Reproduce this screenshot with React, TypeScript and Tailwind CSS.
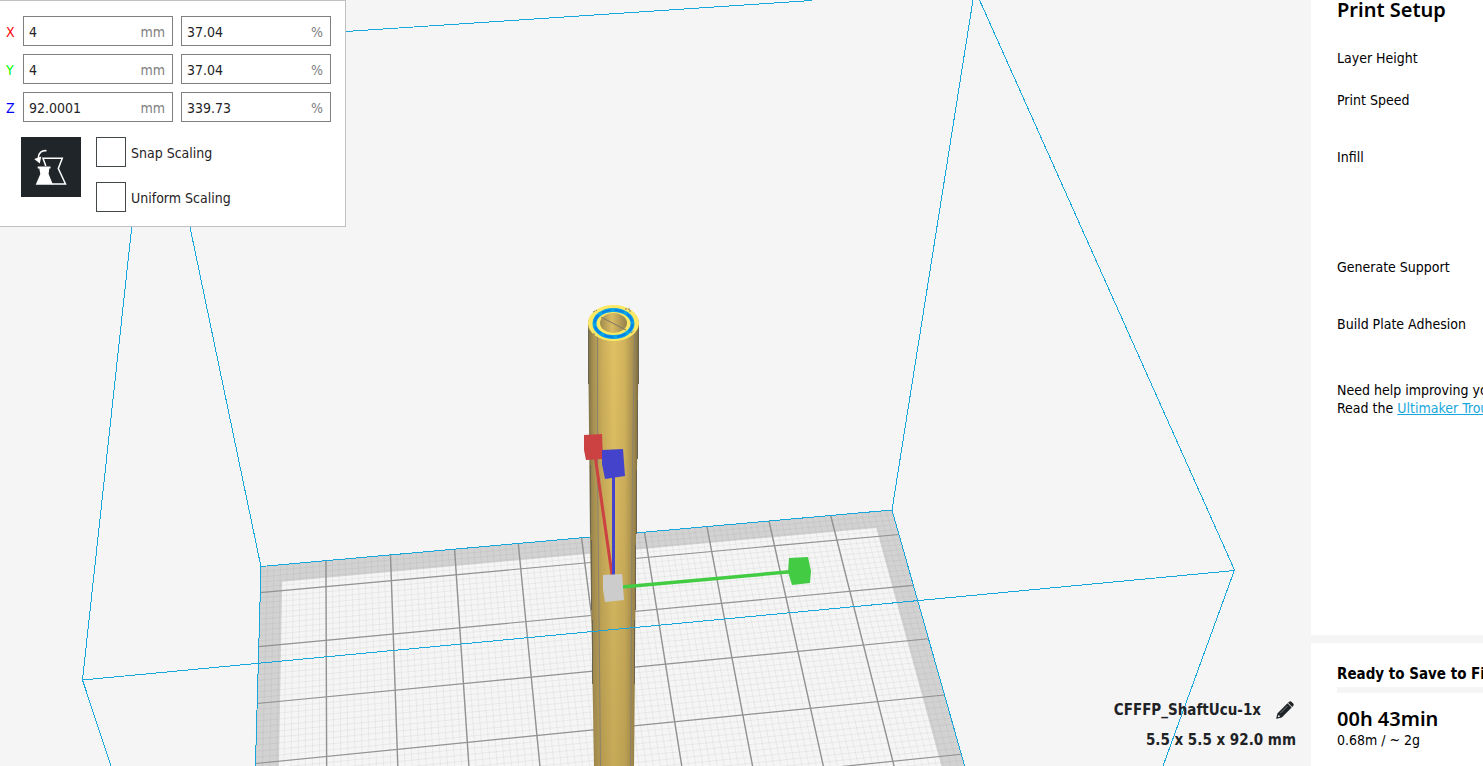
import React from "react";

type Pt = [number, number];

/* Projective map of the build plate: u runs 0..10 across, v runs -0.5.. towards the viewer. */
const origin: Pt = [261, 566.5];
const right: Pt = [892, 510];
const near: Pt = [255.5, 763.5];
const far: Pt = [944.5, 695];

const dx1 = right[0] - far[0];
const dy1 = right[1] - far[1];
const dx2 = near[0] - far[0];
const dy2 = near[1] - far[1];
const sx = origin[0] - right[0] + far[0] - near[0];
const sy = origin[1] - right[1] + far[1] - near[1];
const det = dx1 * dy2 - dx2 * dy1;
const g = (sx * dy2 - dx2 * sy) / det;
const h = (dx1 * sy - sx * dy1) / det;

function project(u: number, v: number): string {
  const s = u / 10;
  const t = (v + 0.5) / 3.5;
  const w = g * s + h * t + 1;
  const x = ((right[0] - origin[0] + g * right[0]) * s + (near[0] - origin[0] + h * near[0]) * t + origin[0]) / w;
  const y = ((right[1] - origin[1] + g * right[1]) * s + (near[1] - origin[1] + h * near[1]) * t + origin[1]) / w;
  return `${x.toFixed(2)} ${y.toFixed(2)}`;
}

const END = 6;
const line = (a: string, b: string) => `M${a}L${b}`;
const range = (n: number) => Array.from({ length: n }, (_, i) => i);

const minor = [
  ...range(101).map((i) => line(project(i / 10, -0.5), project(i / 10, END))),
  ...range(66).map((i) => line(project(0, i / 10 - 0.5), project(10, i / 10 - 0.5))),
].join("");
const majorU = range(9).map((i) => line(project(i + 1, -0.5), project(i + 1, END))).join("");
const majorV = range(6).map((i) => line(project(0, i), project(10, i))).join("");
const quad = (m: number) =>
  `M${project(m, m - 0.5)}L${project(10 - m, m - 0.5)}L${project(10 - m, END)}L${project(m, END)}Z`;

function Scene() {
  return (
    <svg
      className="absolute inset-0 h-full w-full"
      viewBox="0 0 1311 766"
      preserveAspectRatio="xMinYMin slice"
      fill="none"
      aria-hidden="true"
    >
      <defs>
        <linearGradient id="tube" x1="588" x2="639" y1="0" y2="0" gradientUnits="userSpaceOnUse">
          <stop offset="0" stopColor="#7d6f44" />
          <stop offset="0.1" stopColor="#a89253" />
          <stop offset="0.28" stopColor="#ccae5a" />
          <stop offset="0.5" stopColor="#e0c164" />
          <stop offset="0.72" stopColor="#d3b45d" />
          <stop offset="0.9" stopColor="#a58d4e" />
          <stop offset="1" stopColor="#746640" />
        </linearGradient>
        <linearGradient id="shade" x1="0" x2="0" y1="330" y2="766" gradientUnits="userSpaceOnUse">
          <stop offset="0" stopColor="#6b5a30" stopOpacity="0" />
          <stop offset="1" stopColor="#6b5a30" stopOpacity="0.22" />
        </linearGradient>
        <linearGradient id="bore" x1="600" x2="627" y1="0" y2="0" gradientUnits="userSpaceOnUse">
          <stop offset="0" stopColor="#a08b50" />
          <stop offset="0.45" stopColor="#d9bb62" />
          <stop offset="1" stopColor="#93804b" />
        </linearGradient>
      </defs>

      <path d={quad(0)} fill="#d2d2d2" />
      <path d={quad(0.33)} fill="#f5f5f5" />
      <path d={minor} stroke="#777777" strokeOpacity="0.09" />
      <path d={majorV} stroke="#929292" strokeWidth="1.2" />
      <path d={majorU} stroke="#929292" strokeWidth="1.4" />
      <g stroke="#18a7dc" shapeRendering="crispEdges">
        <path d={quad(0)} />
        <path d="M145 105L82.500 680M164.500 105L261 567M346 31.500L812 0.500M973 0L892 510M979.500 0L1234.500 570M82.500 680L111 766M1234.500 570L1163 766" />
      </g>

      <path d="M588 324L590 535L594 766H634L636 540L639 324A25.5 18 0 0 0 588 324Z" fill="url(#tube)" />
      <path d="M588 324L590 535L594 766H634L636 540L639 324Z" fill="url(#shade)" />
      <path d="M588.5 330V384M638.5 326V384M590.5 465V534M591.5 540V610M637.5 400V459M636.5 470V534M635.5 545V610M634.5 620V684M592.5 620V684" stroke="#69634f" />
      <path d="M597.5 336V470L600.5 766M634.5 334L632.5 470L630.5 766" stroke="#8a8270" />

      <ellipse cx="613.5" cy="323" rx="25.5" ry="18" fill="#fbe865" />
      <ellipse cx="613.5" cy="323.5" rx="19" ry="13.5" stroke="#08a6e4" strokeWidth="4" />
      <ellipse cx="613.5" cy="323.5" rx="19" ry="13.5" stroke="#087eea" strokeWidth="2" strokeDasharray="9 4" />
      <ellipse cx="613.5" cy="323" rx="13.5" ry="10" fill="url(#bore)" />
      <path d="M601 317L626 330" stroke="#7d7867" />
      <path d="M593 312L597 310M625 309L630 309V313M594 333V336M631 333L634 331" stroke="#807b6c" strokeDasharray="2 1" />

      <path d="M82.500 680L1234.500 570.500" stroke="#18a7dc" shapeRendering="crispEdges" />

      <path d="M595 455L613 582" stroke="#cc4141" strokeWidth="3" />
      <path d="M613.5 463V580" stroke="#4343cc" strokeWidth="3" />
      <path d="M622 587L799 571" stroke="#43cc43" strokeWidth="3.5" />
      <path d="M584 435L602 434L603 459L586 460L584 450Z" fill="#cc4141" />
      <path d="M602 450L623 449L625 476L605 479L602 464Z" fill="#4343cc" />
      <path d="M789 558L808 557L811 571L810 583L792 585L788 572Z" fill="#43cc43" />
      <path d="M603 575L622 574L624 600L605 602L603 589Z" fill="#cccccc" />
    </svg>
  );
}

function ResetIcon() {
  return (
    <svg width="60" height="60" viewBox="0 0 60 60" fill="none" aria-hidden="true">
      <path d="M24.800 29L22 21.300H41.300L37.300 31.500L44.500 47H31" stroke="#fff" strokeWidth="1.5" />
      <path d="M16.700 29.500H29.500V31.500H28.300L27.600 37L32 47.700H14.700L19.300 37L18.300 31.500H16.700Z" fill="#fff" />
      <path d="M25.500 13.700C21 13.200 17.300 15.800 17.300 21" stroke="#fff" strokeWidth="1.6" />
      <path d="M13.200 22L20.300 19.500L18.800 26.500Z" fill="#fff" />
    </svg>
  );
}

function PencilIcon() {
  return (
    <svg width="18" height="18" viewBox="0 0 18 18" aria-hidden="true">
      <path d="M12 1.800L13.200 0.700Q14.300 -0.200 15.400 0.800L17.200 2.600Q18.200 3.700 17.300 4.800L16.200 6Z" fill="#1f2326" />
      <path d="M11.500 2.300L15.700 6.500L6.300 15.900L2.100 11.700Z" fill="#1f2326" />
      <path d="M2.300 11.500L6.500 15.700L5.700 16.500L0.800 17.700Q0.100 17.800 0.300 17.100L1.500 12.300Z" fill="#1f2326" />
      <path d="M4.500 12L11.500 5" stroke="#8f9192" strokeWidth="0.8" />
      <circle cx="2.800" cy="15.200" r="1" fill="#e4e4e4" />
    </svg>
  );
}

const axes = [
  { name: "X", color: "text-[#ff0000]", size: "4", scale: "37.04" },
  { name: "Y", color: "text-[#00ff00]", size: "4", scale: "37.04" },
  { name: "Z", color: "text-[#0000ff]", size: "92.0001", scale: "339.73" },
];

function Field({ label, value, unit }: { label: string; value: string; unit: string }) {
  return (
    <label className="flex h-[30px] w-[150px] items-center border border-[#808080] bg-white pl-[5px] pr-[7px] pt-[2px]">
      <input aria-label={label} defaultValue={value} className="w-0 min-w-0 flex-1 bg-transparent outline-none" />
      <span className="text-[#808080]">{unit}</span>
    </label>
  );
}

function ScalePanel() {
  return (
    <section className="relative w-[346px] border-b border-r border-t border-[#c0c0c0] bg-white pb-[14px] pl-[6px] pt-[15px] text-[#1f2326]">
      <div className="flex flex-col gap-2">
        {axes.map((a) => (
          <div key={a.name} className="flex items-center">
            <span className={`w-[17px] pt-[2px] ${a.color}`}>{a.name}</span>
            <div className="flex gap-2">
              <Field label={`${a.name} size`} value={a.size} unit="mm" />
              <Field label={`${a.name} scale`} value={a.scale} unit="%" />
            </div>
          </div>
        ))}
      </div>
      <div className="mt-[15px] flex gap-[15px] pl-[15px]">
        <button aria-label="Reset scale" className="h-[60px] w-[60px] bg-[#1f2528]">
          <ResetIcon />
        </button>
        <div className="flex flex-col gap-[15px]">
          {["Snap Scaling", "Uniform Scaling"].map((t) => (
            <label key={t} className="flex h-[30px] items-center gap-[5px]">
              <input type="checkbox" className="h-[30px] w-[30px] appearance-none border border-[#42474a] bg-white" />
              <span className="pt-[2px]">{t}</span>
            </label>
          ))}
        </div>
      </div>
    </section>
  );
}

function Sidebar() {
  return (
    <aside className="flex w-[172px] shrink-0 flex-col gap-2 overflow-hidden whitespace-nowrap text-black">
      <section className="flex-1 bg-white pl-[26px]">
        <h2 className="font-['Noto_Sans',sans-serif] text-[20px] font-semibold leading-5">Print Setup</h2>
        <p className="mt-[29px]">Layer Height</p>
        <p className="mt-6">Print Speed</p>
        <p className="mt-[39px]">Infill</p>
        <p className="mt-[92px]">Generate Support</p>
        <p className="mt-[39px]">Build Plate Adhesion</p>
        <p className="mt-12">Need help improving your prints?</p>
        <p>
          Read the <a href="#guides" className="text-[#18a7dc] underline">Ultimaker Troubleshooting Guides</a>
        </p>
      </section>
      <section className="h-[123px] bg-white pl-[26px] pt-[22px]">
        <p className="text-[15px] font-bold">Ready to Save to File</p>
        <div className="mt-1 h-[6px] bg-[#f5f5f5]" />
        <p className="mt-4 font-['Noto_Sans',sans-serif] text-[20px] font-semibold leading-5">00h 43min</p>
        <p className="mt-[2px]">0.68m / ~ 2g</p>
      </section>
    </aside>
  );
}

export default function App() {
  return (
    <div className="flex h-screen overflow-hidden bg-[#f5f5f5] font-['DejaVu_Sans_Condensed','Noto_Sans',sans-serif] text-[14px] leading-[18px]">
      <main className="relative flex min-w-0 flex-1 flex-col items-start justify-between">
        <Scene />
        <ScalePanel />
        <div className="relative flex flex-col items-end gap-3 self-end pb-[17px] pr-[15px] text-[15px] font-bold text-[#1f2326]">
          <div className="flex items-center gap-[15px]">
            <span>CFFFP_ShaftUcu-1x</span>
            <button aria-label="Rename" className="mr-[2px]">
              <PencilIcon />
            </button>
          </div>
          <span>5.5 x 5.5 x 92.0 mm</span>
        </div>
      </main>
      <Sidebar />
    </div>
  );
}
